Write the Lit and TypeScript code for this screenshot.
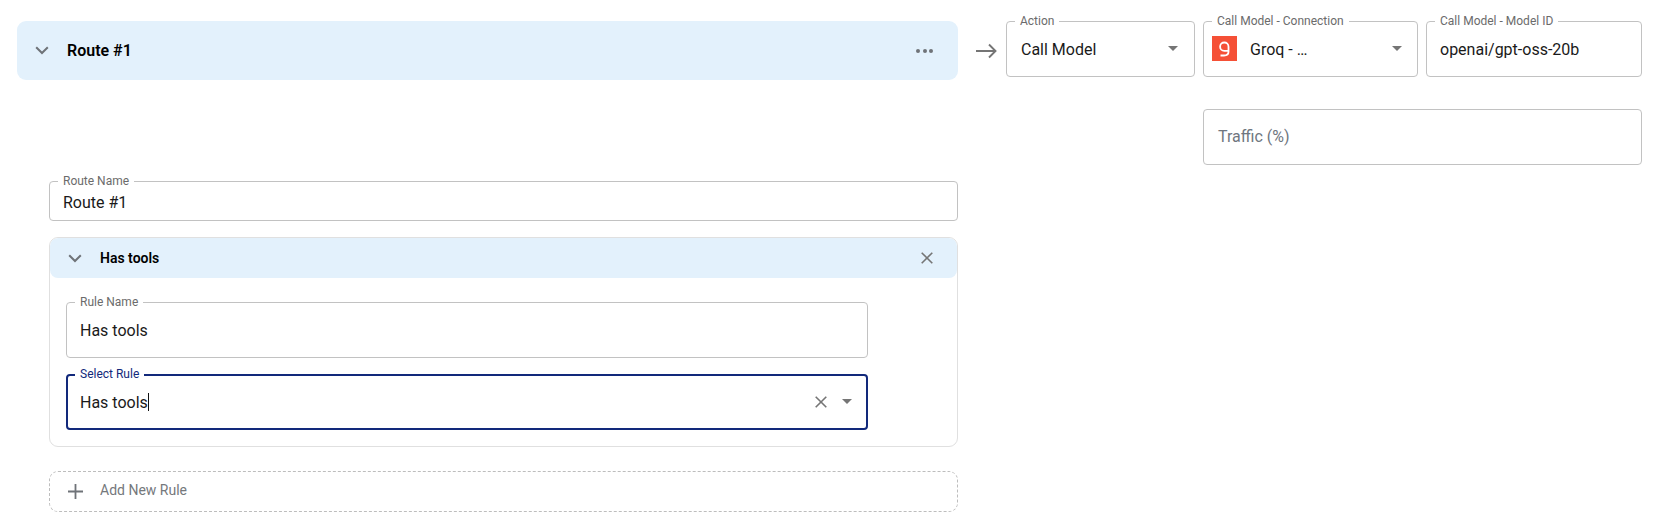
import { LitElement, html, css } from "lit";
import { customElement } from "lit/decorators.js";

const chevron = html`<svg class="chev" viewBox="0 0 14 9" width="14" height="9"><path d="M1.2 1.2 7 7l5.8-5.8" fill="none" stroke="#6f7378" stroke-width="2"/></svg>`;
const caret = html`<svg class="caret" viewBox="0 0 10 5" width="10" height="5"><path d="M0 0h10L5 5z" fill="#757575"/></svg>`;
const cross = html`<svg viewBox="0 0 12 12" width="12" height="12"><path d="M.7.7l10.6 10.6M11.3.7.7 11.3" fill="none" stroke="#757575" stroke-width="1.6"/></svg>`;

@customElement("app-root")
export class AppRoot extends LitElement {
  static styles = css`
    :host { display: block; font-family: Roboto, "Liberation Sans", sans-serif; color: #1a1a1a; background: #fff; height: 518px; overflow: hidden; }
    .page { display: flex; align-items: flex-start; padding: 21px 20px 0 17px; }
    .left { width: 941px; flex: none; display: flex; flex-direction: column; }
    .head { height: 59px; background: #e3f1fc; border-radius: 9px; display: flex; align-items: center; padding: 0 25px 0 18px; }
    .head .chev { margin-right: 18px; }
    .head b { font-size: 16px; font-weight: 600; color: #000; flex: 1; }
    .dots { display: flex; gap: 2.5px; }
    .dots i { width: 4px; height: 4px; border-radius: 50%; background: #6f7378; display: block; }
    .arrow { flex: none; margin: 22px 9px 0 18px; display: block; }
    .right { flex: 1; display: flex; flex-direction: column; gap: 32px; }
    .row { display: flex; gap: 8px; align-items: flex-start; }
    .sub { display: flex; flex-direction: column; padding: 101px 0 0 32px; }
    .field { position: relative; box-sizing: border-box; height: 56px; border: 1px solid #c2c2c2; border-radius: 4px; display: flex; align-items: center; padding: 0 13px; font-size: 16px; gap: 10px; }
    .field > span.val { flex: 1; white-space: nowrap; margin-top: 0; }
    .lab { position: absolute; left: 8px; top: -8px; padding: 0 5px; background: #fff; font-size: 12px; line-height: 14px; color: #6b6b6b; white-space: nowrap; }
    .action { width: 189px; flex: none; padding-left: 14px; }
    .action .caret { margin-right: 3px; margin-top: -2px; }
    .conn .caret { margin-right: 2px; margin-top: -2px; }
    .conn { width: 215px; flex: none; padding-left: 8px; gap: 13px; }
    .model { flex: 1; }
    .traffic { color: #6f7680; margin-left: 197px; padding-left: 14px; }
    .field.traffic > span.val { margin-top: -1px; }
    .name { height: 40px; }
    .field.name > span.val { margin-top: 2px; }
    .gicon { flex: none; display: block; margin-top: -2px; }
    .card { margin-top: 16px; height: 210px; box-sizing: border-box; border: 1px solid #e0e0e0; border-radius: 9px; overflow: hidden; display: flex; flex-direction: column; }
    .rhead { height: 40px; flex: none; background: #e3f1fc; display: flex; align-items: center; padding: 0 24px 0 18px; border-radius: 8px; }
    .rhead .chev { margin-right: 18px; }
    .rhead b { flex: 1; font-size: 14px; font-weight: 600; color: #000; }
    .rbody { display: flex; flex-direction: column; gap: 16px; padding: 24px 0 0 16px; width: 802px; }
    .focus { border: 2px solid #12297b; padding: 0 12px; }
    .focus .lab { color: #12297b; left: 7px; top: -9px; }
    .cursor { display: inline-block; width: 1px; height: 18px; background: #111; vertical-align: -3px; }
    .icons { display: flex; align-items: center; gap: 15px; margin-right: 2px; margin-top: -1px; }
    .add { margin-top: 24px; height: 41px; box-sizing: border-box; border: 1px dashed #bdbdbd; border-radius: 9px; display: flex; align-items: center; padding: 0 0 0 18px; font-size: 14px; color: #75787c; gap: 17px; }
    .add span { margin-top: -4px; }
    .add svg { margin-top: -1px; }
  `;

  render() {
    return html`<div class="page">
      <div class="left">
        <div class="head">${chevron}<b>Route #1</b><div class="dots"><i></i><i></i><i></i></div></div>
        <div class="sub">
          <div class="field name"><span class="lab">Route Name</span><span class="val">Route #1</span></div>
          <div class="card">
            <div class="rhead">${chevron}<b>Has tools</b>${cross}</div>
            <div class="rbody">
              <div class="field"><span class="lab">Rule Name</span><span class="val">Has tools</span></div>
              <div class="field focus"><span class="lab">Select Rule</span><span class="val">Has tools<i class="cursor"></i></span>
                <div class="icons">${cross}${caret}</div></div>
            </div>
          </div>
          <div class="add"><svg viewBox="0 0 15 15" width="15" height="15"><path d="M7.5 0v15M0 7.5h15" stroke="#6f7378" stroke-width="1.8" fill="none"/></svg><span>Add New Rule</span></div>
        </div>
      </div>
      <svg class="arrow" viewBox="0 0 21 16" width="21" height="16"><path d="M0 8h19.5M13 1.5 19.5 8 13 14.5" fill="none" stroke="#757575" stroke-width="1.9"/></svg>
      <div class="right">
        <div class="row">
          <div class="field action"><span class="lab">Action</span><span class="val">Call Model</span>${caret}</div>
          <div class="field conn"><span class="lab">Call Model - Connection</span>
            <svg class="gicon" viewBox="0 0 25 25" width="25" height="25"><rect width="25" height="25" fill="#f55036"/><path d="M8.5 19.5h3.5c2.8 0 4.5-1.2 4.5-3.7V10.7a4.2 4.2 0 1 0-4.2 4.2h4.2" fill="none" stroke="#fff" stroke-width="1.8"/></svg>
            <span class="val">Groq - …</span>${caret}</div>
          <div class="field model"><span class="lab">Call Model - Model ID</span><span class="val">openai/gpt-oss-20b</span></div>
        </div>
        <div class="field traffic"><span class="val">Traffic (%)</span></div>
      </div>
    </div>`;
  }
}
